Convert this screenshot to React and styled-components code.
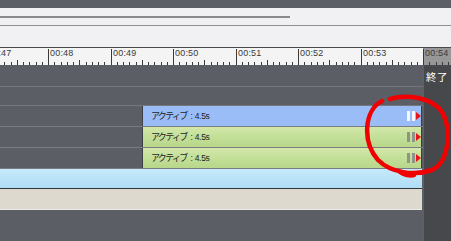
import React from 'react';
import styled, { createGlobalStyle } from 'styled-components';

const GlobalStyle = createGlobalStyle`
  html, body {
    margin: 0;
    padding: 0;
    background: #5b5e65;
    font-family: "Liberation Sans", "Noto Sans CJK JP", sans-serif;
  }
`;

const Frame = styled.div`
  width: 451px;
  height: 241px;
  display: flex;
  flex-direction: column;
  position: relative;
  overflow: hidden;
  background: #5b5e65;
`;

const TopBar = styled.div`
  height: 8px;
  background: #5c5f66;
`;

const Toolbar = styled.div`
  height: 39px;
  background: #f1f1f3;
  display: flex;
  flex-direction: column;
`;

const Scroller = styled.div`
  margin-top: 8px;
  width: 290px;
  height: 2px;
  background: #8a8a8a;
`;

const Divider = styled.div`
  margin-top: 7px;
  height: 1px;
  background: #8e8e8e;
`;

const Ruler = styled.div`
  height: 17px;
  border-top: 1px solid #4a4a4a;
  background: linear-gradient(to right, #f4f4f4 0, #f4f4f4 423px, #979797 423px);
  position: relative;
  overflow: hidden;
`;

const TickSvg = styled.svg`
  display: block;
  position: absolute;
  left: 0;
  top: 0;
`;

const TimeLabel = styled.span`
  position: absolute;
  top: 0;
  font-size: 9px;
  line-height: 10px;
  color: #3a3a3a;
  letter-spacing: 0.2px;
  white-space: nowrap;
`;

const Body = styled.div`
  flex: 1;
  display: flex;
`;

const Tracks = styled.div`
  width: 423px;
  display: flex;
  flex-direction: column;
`;

const Lane = styled.div`
  height: ${(p) => p.h}px;
  border-bottom: 1px solid #73767d;
  display: flex;
`;

const ClipLane = styled.div`
  height: 20px;
  border-bottom: 1px solid #7a7c82;
  display: flex;
`;

const Clip = styled.div`
  margin-left: 142px;
  width: 280px;
  height: 20px;
  box-sizing: border-box;
  border-left: 1px solid #3d3f44;
  border-right: 1px solid #3d3f44;
  background: ${(p) =>
    p.blue
      ? '#9bbdf7'
      : 'linear-gradient(to bottom, #d3e7a9 0%, #c3df98 50%, #b8d78a 100%)'};
  display: flex;
  align-items: center;
  padding-left: 8px;
  color: #1e1e1e;
`;

const ClipName = styled.span`
  font-family: "Noto Sans CJK JP", sans-serif;
  font-size: 9px;
  letter-spacing: -1.7px;
  line-height: 10px;
`;

const ClipTime = styled.span`
  font-size: 8.5px;
  line-height: 10px;
  margin-left: 4px;
  letter-spacing: -0.3px;
`;

const Handle = styled.div`
  margin-left: auto;
  display: flex;
  align-items: center;
  gap: 2px;
`;

const Bar = styled.div`
  width: 3px;
  height: 10px;
  background: ${(p) => (p.blue ? '#f4f7ff' : '#8f9488')};
`;

const Arrow = styled.div`
  width: 0;
  height: 0;
  border-top: 4px solid transparent;
  border-bottom: 4px solid transparent;
  border-left: 5px solid #e8141a;
  margin-left: -1px;
`;

const SkyBand = styled.div`
  width: 422px;
  height: 19px;
  background: linear-gradient(to bottom, #c6e9fb, #b0ddf5);
  border-bottom: 1px solid #35373c;
`;

const SandBand = styled.div`
  width: 422px;
  height: 20px;
  background: #ddd9cf;
  border-bottom: 1px solid #eceae4;
`;

const EndColumn = styled.div`
  flex: 1;
  background: #47484c;
  border-left: 1px solid #5e6066;
  padding: 2px 0 0 2px;
`;

const EndLabel = styled.span`
  font-family: "Noto Sans CJK JP", sans-serif;
  font-size: 10.5px;
  color: #ffffff;
  letter-spacing: 0.5px;
`;

const Annotation = styled.svg`
  position: absolute;
  left: 0;
  top: 0;
  pointer-events: none;
`;

const majors = [-14.5, 48, 110.5, 173, 235.5, 298, 360.5, 423];
const labels = ['00:47', '00:48', '00:49', '00:50', '00:51', '00:52', '00:53', '00:54'];

function RulerTicks() {
  const ticks = [];
  majors.forEach((m, i) => {
    ticks.push(<rect key={`M${i}`} x={Math.round(m)} y={1} width={1} height={16} />);
    for (let k = 1; k < 10; k++) {
      const x = Math.round(m + k * 6.25);
      const h = k === 5 ? 5 : 3;
      ticks.push(<rect key={`m${i}-${k}`} x={x} y={17 - h} width={1} height={h} />);
    }
  });
  return (
    <TickSvg width="451" height="17" fill="#3a3a3a">
      {ticks}
    </TickSvg>
  );
}

function ClipRow({ blue }) {
  return (
    <ClipLane>
      <Clip blue={blue}>
        <ClipName>アクティブ</ClipName>
        <ClipTime>: 4.5s</ClipTime>
        <Handle>
          <Bar blue={blue} />
          <Bar blue={blue} />
          <Arrow />
        </Handle>
      </Clip>
    </ClipLane>
  );
}

export default function App() {
  return (
    <>
      <GlobalStyle />
      <Frame>
        <TopBar />
        <Toolbar>
          <Scroller />
          <Divider />
        </Toolbar>
        <Ruler>
          <RulerTicks />
          {majors.map((m, i) => (
            <TimeLabel key={labels[i]} style={{ left: Math.round(m) + 2 }}>
              {labels[i]}
            </TimeLabel>
          ))}
        </Ruler>
        <Body>
          <Tracks>
            <Lane h={21} />
            <Lane h={18} />
            <ClipRow blue />
            <ClipRow />
            <ClipRow />
            <SkyBand />
            <SandBand />
          </Tracks>
          <EndColumn>
            <EndLabel>終了</EndLabel>
          </EndColumn>
        </Body>
        <Annotation width="451" height="241">
          <path
            d="M 382 101 C 364 110, 362 142, 378 160 C 391 173, 414 176, 432 170 C 449 162, 452 130, 442 112 C 432 97, 406 94, 390 99"
            fill="none"
            stroke="#f00000"
            strokeWidth="4.5"
            strokeLinecap="round"
          />
          <path
            d="M 400 172 C 404 175, 410 176, 414 175"
            fill="none"
            stroke="#f00000"
            strokeWidth="4.5"
            strokeLinecap="round"
          />
        </Annotation>
      </Frame>
    </>
  );
}
